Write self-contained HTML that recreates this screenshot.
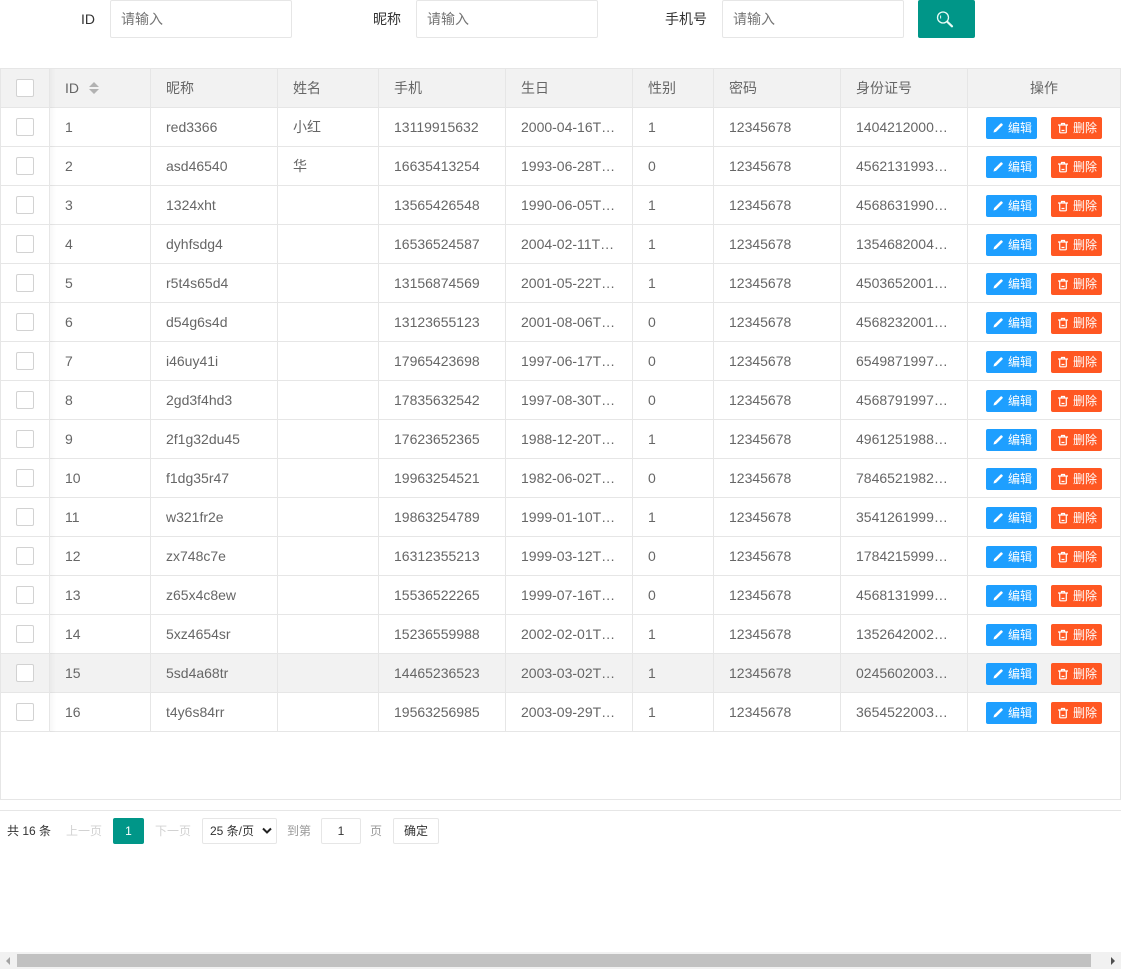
<!DOCTYPE html>
<html lang="zh"><head><meta charset="utf-8"><title>用户列表</title>
<style>
*{box-sizing:border-box}
html,body{margin:0;padding:0;background:#fff;width:1121px;height:969px;overflow:hidden}
body{font:14px/20px "Liberation Sans","Noto Sans CJK SC",sans-serif;color:#666;position:relative}
.lb{position:absolute;top:9px;color:#333;white-space:nowrap}
.ip{position:absolute;top:0;width:182px;height:38px;border:1px solid #e6e6e6;border-radius:2px;padding-left:10px;line-height:36px;color:#757575;font-size:14px;background:#fff}
.sb{position:absolute;left:918px;top:0;width:57px;height:38px;background:#009688;border-radius:2px}
.sb svg{position:absolute;left:18px;top:10px}
.box{position:absolute;left:0;top:68px;width:1121px;height:732px;border:1px solid #e6e6e6}
table{border-collapse:separate;border-spacing:0;table-layout:fixed;width:1119px}
td,th{height:39px;padding:0 15px;border-right:1px solid #e6e6e6;border-bottom:1px solid #e6e6e6;font-weight:400;text-align:left;color:#666;font-size:14px;line-height:20px;overflow:hidden;white-space:nowrap;text-overflow:ellipsis}
th{background:#f2f2f2}
td:last-child,th:last-child{border-right:0;padding:0}
th:last-child{text-align:center}
td:first-child,th:first-child{padding:0}
.h td{background:#f2f2f2}
.c{display:block;width:18px;height:18px;margin-left:15px;border:1px solid #d2d2d2;border-radius:2px;background:#fff}
.sh{position:absolute;left:49px;top:0;width:6px;height:663px;background:linear-gradient(90deg,rgba(0,0,0,.03),rgba(0,0,0,0));pointer-events:none}
.s{position:absolute;left:39px;top:12px;width:10px;height:14px}
.b{position:absolute;top:9px;width:51px;height:22px;border-radius:2px;color:#fff;font-size:12px;line-height:22px;padding-left:22px}
.b svg{position:absolute;left:6px;top:5px}
.e{left:985px;background:#1e9fff}
.d{left:1050px;background:#ff5722}
.rw{position:relative}
.pl{position:absolute;left:0;top:810px;width:1121px;height:1px;background:#e6e6e6}
.p{position:absolute;font-size:12px;line-height:26px;top:818px;white-space:nowrap}
.g{color:#999}
.l{color:#d2d2d2}
.pb{position:absolute;top:818px;height:26px;border:1px solid #e6e6e6;border-radius:2px;background:#fff;text-align:center;font-size:12px;line-height:24px;color:#333}
select{position:absolute;left:202px;top:818px;width:75px;height:26px;border:1px solid #e6e6e6;border-radius:2px;background:#fff;font:12px "Liberation Sans","Noto Sans CJK SC",sans-serif;color:#333;padding:0 0 0 7px;appearance:none;-webkit-appearance:none}
.sc{position:absolute;left:0;top:952px;width:1121px;height:17px;background:#f1f1f1}
.th{position:absolute;left:17px;top:2px;width:1074px;height:13px;background:#c1c1c1}
</style></head><body>
<svg width="0" height="0" style="position:absolute"><defs>
<symbol id="pe" viewBox="0 0 12 12"><path d="M1.500 10.500l.6-2.500L8.600 1.500c.4-.4.9-.4 1.300 0l.6.6c.4.4.4.9 0 1.300L4 9.900z" fill="#fff"/></symbol>
<symbol id="tr" viewBox="0 0 12 12"><path d="M1 3h10M4.500 2.700V1.500h3v1.200M2.700 3v7c0 .5.300.8.800.8h5c.5 0 .8-.3.800-.8V3M4.500 8.500h3" fill="none" stroke="#fff" stroke-width="1.200"/></symbol>
</defs></svg>

<div class="lb" style="left:81px">ID</div><div class="ip" style="left:110px">请输入</div>
<div class="lb" style="left:373px">昵称</div><div class="ip" style="left:416px">请输入</div>
<div class="lb" style="left:665px">手机号</div><div class="ip" style="left:722px">请输入</div>
<div class="sb"><svg width="20" height="20" viewBox="0 0 20 20"><circle cx="7" cy="7.500" r="5.500" fill="none" stroke="#e8fbf6" stroke-width="1.300"/><path d="M11.500 12l4.500 4.300" stroke="#e8fbf6" stroke-width="2.200" stroke-linecap="round"/><path d="M4.600 5.500v3" stroke="#e8fbf6" stroke-width="1"/></svg></div>

<div class="box">
<table><colgroup><col style="width:49px"><col style="width:101px"><col style="width:127px"><col style="width:101px"><col style="width:127px"><col style="width:127px"><col style="width:81px"><col style="width:127px"><col style="width:127px"><col style="width:152px"></colgroup>
<tr class="rw"><th><i class="c"></i></th><th style="position:relative">ID<svg class="s" viewBox="0 0 10 14"><path d="M5 1l5 5H0zM5 13l5-5H0z" fill="#b2b2b2"/></svg></th><th>昵称</th><th>姓名</th><th>手机</th><th>生日</th><th>性别</th><th>密码</th><th>身份证号</th><th>操作</th></tr>
<tr><td><i class="c"></i></td><td>1</td><td>red3366</td><td>小红</td><td>13119915632</td><td>2000-04-16T00:00:00</td><td>1</td><td>12345678</td><td>140421200004160000</td><td></td></tr>
<tr><td><i class="c"></i></td><td>2</td><td>asd46540</td><td>华</td><td>16635413254</td><td>1993-06-28T00:00:00</td><td>0</td><td>12345678</td><td>456213199306280000</td><td></td></tr>
<tr><td><i class="c"></i></td><td>3</td><td>1324xht</td><td></td><td>13565426548</td><td>1990-06-05T00:00:00</td><td>1</td><td>12345678</td><td>456863199006050000</td><td></td></tr>
<tr><td><i class="c"></i></td><td>4</td><td>dyhfsdg4</td><td></td><td>16536524587</td><td>2004-02-11T00:00:00</td><td>1</td><td>12345678</td><td>135468200402110000</td><td></td></tr>
<tr><td><i class="c"></i></td><td>5</td><td>r5t4s65d4</td><td></td><td>13156874569</td><td>2001-05-22T00:00:00</td><td>1</td><td>12345678</td><td>450365200105220000</td><td></td></tr>
<tr><td><i class="c"></i></td><td>6</td><td>d54g6s4d</td><td></td><td>13123655123</td><td>2001-08-06T00:00:00</td><td>0</td><td>12345678</td><td>456823200108060000</td><td></td></tr>
<tr><td><i class="c"></i></td><td>7</td><td>i46uy41i</td><td></td><td>17965423698</td><td>1997-06-17T00:00:00</td><td>0</td><td>12345678</td><td>654987199706170000</td><td></td></tr>
<tr><td><i class="c"></i></td><td>8</td><td>2gd3f4hd3</td><td></td><td>17835632542</td><td>1997-08-30T00:00:00</td><td>0</td><td>12345678</td><td>456879199708300000</td><td></td></tr>
<tr><td><i class="c"></i></td><td>9</td><td>2f1g32du45</td><td></td><td>17623652365</td><td>1988-12-20T00:00:00</td><td>1</td><td>12345678</td><td>496125198812200000</td><td></td></tr>
<tr><td><i class="c"></i></td><td>10</td><td>f1dg35r47</td><td></td><td>19963254521</td><td>1982-06-02T00:00:00</td><td>0</td><td>12345678</td><td>784652198206020000</td><td></td></tr>
<tr><td><i class="c"></i></td><td>11</td><td>w321fr2e</td><td></td><td>19863254789</td><td>1999-01-10T00:00:00</td><td>1</td><td>12345678</td><td>354126199901100000</td><td></td></tr>
<tr><td><i class="c"></i></td><td>12</td><td>zx748c7e</td><td></td><td>16312355213</td><td>1999-03-12T00:00:00</td><td>0</td><td>12345678</td><td>178421599903120000</td><td></td></tr>
<tr><td><i class="c"></i></td><td>13</td><td>z65x4c8ew</td><td></td><td>15536522265</td><td>1999-07-16T00:00:00</td><td>0</td><td>12345678</td><td>456813199907160000</td><td></td></tr>
<tr><td><i class="c"></i></td><td>14</td><td>5xz4654sr</td><td></td><td>15236559988</td><td>2002-02-01T00:00:00</td><td>1</td><td>12345678</td><td>135264200202010000</td><td></td></tr>
<tr class="h"><td><i class="c"></i></td><td>15</td><td>5sd4a68tr</td><td></td><td>14465236523</td><td>2003-03-02T00:00:00</td><td>1</td><td>12345678</td><td>024560200303020000</td><td></td></tr>
<tr><td><i class="c"></i></td><td>16</td><td>t4y6s84rr</td><td></td><td>19563256985</td><td>2003-09-29T00:00:00</td><td>1</td><td>12345678</td><td>365452200309290000</td><td></td></tr>
</table>
<div class="sh"></div>
<div style="position:absolute;left:0;top:39px;width:1119px">
<div style="position:absolute;top:0;left:0;width:1119px;height:39px"><a class="b e"><svg width="12" height="12"><use href="#pe"/></svg>编辑</a><a class="b d"><svg width="12" height="12"><use href="#tr"/></svg>删除</a></div>
<div style="position:absolute;top:39px;left:0;width:1119px;height:39px"><a class="b e"><svg width="12" height="12"><use href="#pe"/></svg>编辑</a><a class="b d"><svg width="12" height="12"><use href="#tr"/></svg>删除</a></div>
<div style="position:absolute;top:78px;left:0;width:1119px;height:39px"><a class="b e"><svg width="12" height="12"><use href="#pe"/></svg>编辑</a><a class="b d"><svg width="12" height="12"><use href="#tr"/></svg>删除</a></div>
<div style="position:absolute;top:117px;left:0;width:1119px;height:39px"><a class="b e"><svg width="12" height="12"><use href="#pe"/></svg>编辑</a><a class="b d"><svg width="12" height="12"><use href="#tr"/></svg>删除</a></div>
<div style="position:absolute;top:156px;left:0;width:1119px;height:39px"><a class="b e"><svg width="12" height="12"><use href="#pe"/></svg>编辑</a><a class="b d"><svg width="12" height="12"><use href="#tr"/></svg>删除</a></div>
<div style="position:absolute;top:195px;left:0;width:1119px;height:39px"><a class="b e"><svg width="12" height="12"><use href="#pe"/></svg>编辑</a><a class="b d"><svg width="12" height="12"><use href="#tr"/></svg>删除</a></div>
<div style="position:absolute;top:234px;left:0;width:1119px;height:39px"><a class="b e"><svg width="12" height="12"><use href="#pe"/></svg>编辑</a><a class="b d"><svg width="12" height="12"><use href="#tr"/></svg>删除</a></div>
<div style="position:absolute;top:273px;left:0;width:1119px;height:39px"><a class="b e"><svg width="12" height="12"><use href="#pe"/></svg>编辑</a><a class="b d"><svg width="12" height="12"><use href="#tr"/></svg>删除</a></div>
<div style="position:absolute;top:312px;left:0;width:1119px;height:39px"><a class="b e"><svg width="12" height="12"><use href="#pe"/></svg>编辑</a><a class="b d"><svg width="12" height="12"><use href="#tr"/></svg>删除</a></div>
<div style="position:absolute;top:351px;left:0;width:1119px;height:39px"><a class="b e"><svg width="12" height="12"><use href="#pe"/></svg>编辑</a><a class="b d"><svg width="12" height="12"><use href="#tr"/></svg>删除</a></div>
<div style="position:absolute;top:390px;left:0;width:1119px;height:39px"><a class="b e"><svg width="12" height="12"><use href="#pe"/></svg>编辑</a><a class="b d"><svg width="12" height="12"><use href="#tr"/></svg>删除</a></div>
<div style="position:absolute;top:429px;left:0;width:1119px;height:39px"><a class="b e"><svg width="12" height="12"><use href="#pe"/></svg>编辑</a><a class="b d"><svg width="12" height="12"><use href="#tr"/></svg>删除</a></div>
<div style="position:absolute;top:468px;left:0;width:1119px;height:39px"><a class="b e"><svg width="12" height="12"><use href="#pe"/></svg>编辑</a><a class="b d"><svg width="12" height="12"><use href="#tr"/></svg>删除</a></div>
<div style="position:absolute;top:507px;left:0;width:1119px;height:39px"><a class="b e"><svg width="12" height="12"><use href="#pe"/></svg>编辑</a><a class="b d"><svg width="12" height="12"><use href="#tr"/></svg>删除</a></div>
<div style="position:absolute;top:546px;left:0;width:1119px;height:39px"><a class="b e"><svg width="12" height="12"><use href="#pe"/></svg>编辑</a><a class="b d"><svg width="12" height="12"><use href="#tr"/></svg>删除</a></div>
<div style="position:absolute;top:585px;left:0;width:1119px;height:39px"><a class="b e"><svg width="12" height="12"><use href="#pe"/></svg>编辑</a><a class="b d"><svg width="12" height="12"><use href="#tr"/></svg>删除</a></div>
</div>
</div>

<div class="pl"></div>
<div class="p" style="left:7px;color:#333">共 16 条</div>
<div class="p l" style="left:66px">上一页</div>
<div class="pb" style="left:113px;width:31px;background:#009688;border-color:#009688;color:#fff">1</div>
<div class="p l" style="left:155px">下一页</div>
<select><option>25 条/页</option></select>
<svg style="position:absolute;left:262px;top:827px;pointer-events:none" width="10" height="8" viewBox="0 0 10 8"><path d="M1 1.500l4 4 4-4" fill="none" stroke="#222" stroke-width="2"/></svg>
<div class="p g" style="left:287px">到第</div>
<div class="pb" style="left:321px;width:40px">1</div>
<div class="p g" style="left:370px">页</div>
<div class="pb" style="left:393px;width:46px">确定</div>

<div class="sc"><div class="th"></div>
<svg style="position:absolute;left:0;top:0" width="17" height="17"><path d="M6 9l4-4v8z" fill="#a3a3a3"/></svg>
<svg style="position:absolute;left:1104px;top:0" width="17" height="17"><path d="M11 9L7 5v8z" fill="#505050"/></svg>
</div>
</body></html>
